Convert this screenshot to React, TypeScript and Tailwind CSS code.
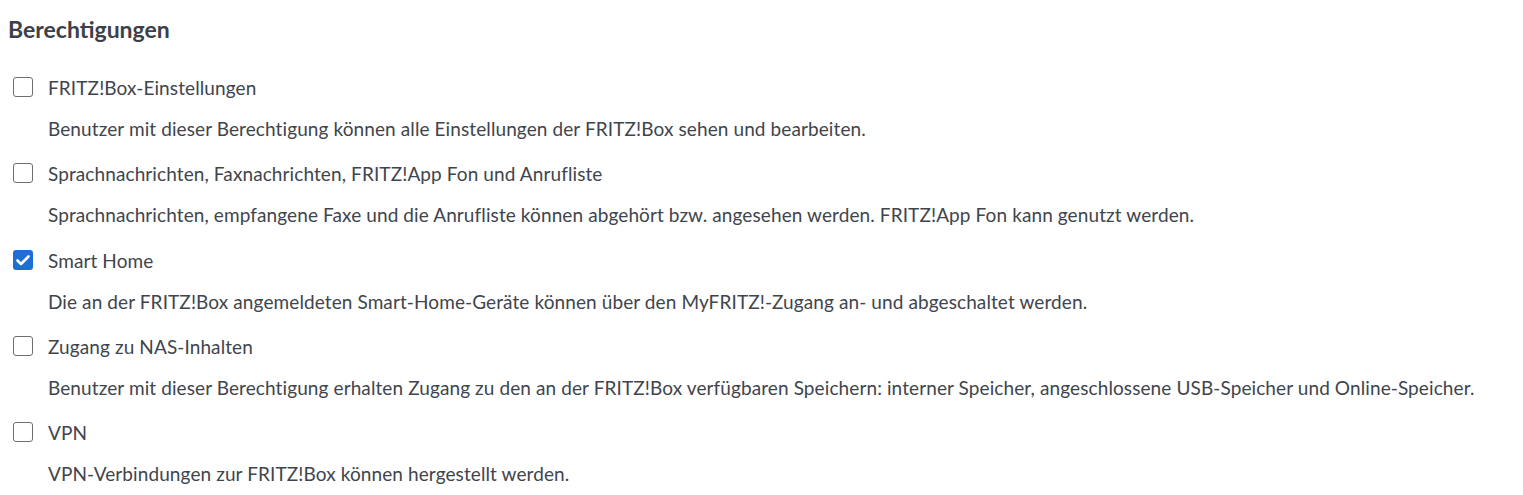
import { useState } from 'react';

interface Permission {
  id: string;
  label: string;
  description: string;
  checked: boolean;
}

const initialPermissions: Permission[] = [
  {
    id: 'settings',
    label: 'FRITZ!Box-Einstellungen',
    description: 'Benutzer mit dieser Berechtigung können alle Einstellungen der FRITZ!Box sehen und bearbeiten.',
    checked: false,
  },
  {
    id: 'messages',
    label: 'Sprachnachrichten, Faxnachrichten, FRITZ!App Fon und Anrufliste',
    description:
      'Sprachnachrichten, empfangene Faxe und die Anrufliste können abgehört bzw. angesehen werden. FRITZ!App Fon kann genutzt werden.',
    checked: false,
  },
  {
    id: 'smarthome',
    label: 'Smart Home',
    description:
      'Die an der FRITZ!Box angemeldeten Smart-Home-Geräte können über den MyFRITZ!-Zugang an- und abgeschaltet werden.',
    checked: true,
  },
  {
    id: 'nas',
    label: 'Zugang zu NAS-Inhalten',
    description:
      'Benutzer mit dieser Berechtigung erhalten Zugang zu den an der FRITZ!Box verfügbaren Speichern: interner Speicher, angeschlossene USB-Speicher und Online-Speicher.',
    checked: false,
  },
  {
    id: 'vpn',
    label: 'VPN',
    description: 'VPN-Verbindungen zur FRITZ!Box können hergestellt werden.',
    checked: false,
  },
];

export default function App() {
  const [permissions, setPermissions] = useState<Permission[]>(initialPermissions);

  const toggle = (id: string) => {
    setPermissions(permissions.map(p => (p.id === id ? { ...p, checked: !p.checked } : p)));
  };

  return (
    <div className="bg-white min-h-[495px] px-2 pt-[14px] text-[#40454d] font-['Lato',sans-serif]">
      <h2 className="text-[23px] font-bold leading-[30px] text-[#3c4048]">Berechtigungen</h2>

      <div className="mt-[31px] flex flex-col">
        {permissions.map(p => (
          <div key={p.id} className="h-[86.25px]">
            <label className="flex items-center gap-[15px] pl-[5px] h-[24px] cursor-pointer">
              <input
                type="checkbox"
                checked={p.checked}
                onChange={() => toggle(p.id)}
                className="sr-only"
              />
              {p.checked ? (
                <span className="w-5 h-5 rounded-[3px] bg-[#1d6fd6] flex items-center justify-center">
                  <svg viewBox="0 0 20 20" className="w-5 h-5">
                    <path d="M4.5 10.5l3.5 3.5 7.5-7.5" fill="none" stroke="white" strokeWidth="2.6" strokeLinecap="round" strokeLinejoin="round" />
                  </svg>
                </span>
              ) : (
                <span className="w-5 h-5 rounded-[3px] border-[1.5px] border-[#6e6e6e] bg-white" />
              )}
              <span className="text-[19px] leading-[24px] tracking-[0.1px] pt-[2px]">{p.label}</span>
            </label>
            <p className="ml-10 mt-[18px] text-[19px] leading-[24px] tracking-[0.1px]">{p.description}</p>
          </div>
        ))}
      </div>
    </div>
  );
}
